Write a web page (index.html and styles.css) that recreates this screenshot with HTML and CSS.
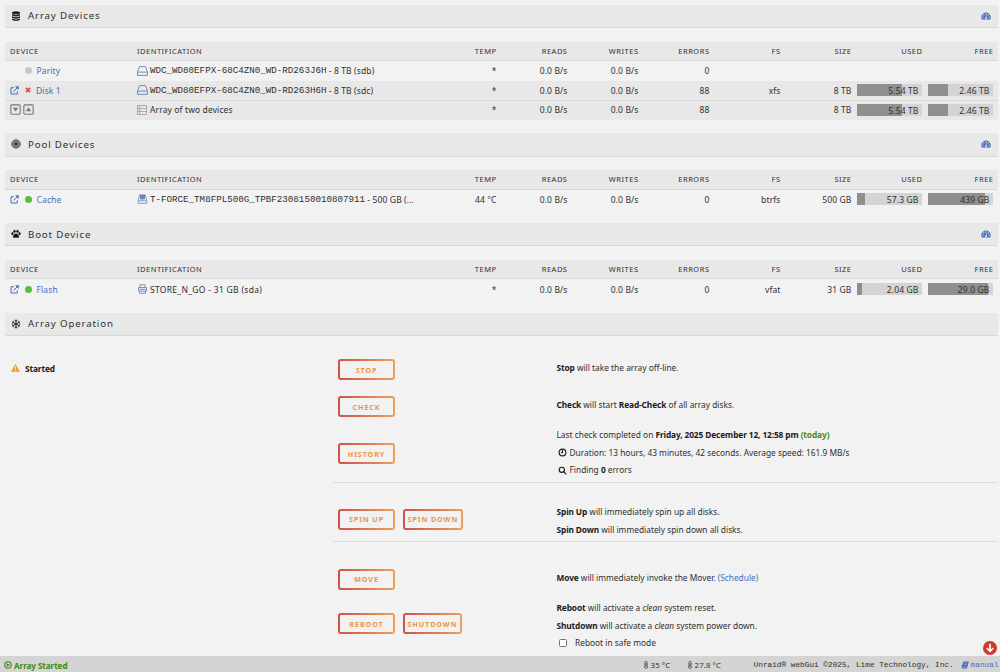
FILE: index.html
```html
<!DOCTYPE html>
<html lang="en">
<head>
    <meta charset="UTF-8">
    <meta name="viewport" content="width=device-width, initial-scale=1.0">
    <title>Main</title>
    <link rel="stylesheet" href="styles.css">
</head>
<body>
    <!-- Shared icons -->
    <svg class="sprite">
        <symbol id="gauge" viewBox="0 0 20 16">
            <path d="M10 1a9.5 9.5 0 0 0-9.5 9.5c0 1.8.5 3.3 1.3 4.7h16.4c.8-1.4 1.3-2.9 1.3-4.7A9.5 9.5 0 0 0 10 1z" fill="#486dba"/>
            <g fill="#e8e8e8"><circle cx="3.7" cy="10.5" r="1.3"/><circle cx="5.6" cy="6" r="1.3"/><circle cx="10" cy="4" r="1.3"/><circle cx="14.4" cy="6" r="1.3"/><circle cx="16.3" cy="10.5" r="1.3"/><circle cx="10" cy="12.5" r="2"/></g>
            <path d="M10 12.5l1.3-6" stroke="#e8e8e8" stroke-width="1.3"/>
        </symbol>
        <symbol id="external" viewBox="0 0 18 18">
            <path d="M8 3.5H2V16h12.5v-5.500M7 11l8.500-8.500" fill="none" stroke="currentColor" stroke-width="2"/>
            <path d="M10 .5h7.500V8z" fill="currentColor"/>
        </symbol>
        <symbol id="disk" viewBox="0 0 20 18">
            <path d="M4.500 1h11L19 11v6H1v-6zM1 11h18" fill="none" stroke="currentColor" stroke-width="1.700"/>
        </symbol>
    </svg>

    <div class="content">
        <div class="title">
            <svg class="icon" viewBox="0 0 18 20"><g fill="#1c1b1b"><ellipse cx="9" cy="3.500" rx="8" ry="3"/><path d="M1 5.500c2 3 14 3 16 0v3c-2 3-14 3-16 0zM1 10c2 3 14 3 16 0v3c-2 3-14 3-16 0zM1 14.500c2 3 14 3 16 0v2c-2 4-14 4-16 0z"/></g></svg>
            <span>Array Devices</span>
            <svg class="gauge"><use href="#gauge"/></svg>
        </div>
        <div class="table">
            <div class="row head">
                <span>DEVICE</span><span>IDENTIFICATION</span><span>TEMP</span><span>READS</span><span>WRITES</span><span>ERRORS</span><span>FS</span><span>SIZE</span><span>USED</span><span>FREE</span>
            </div>
            <div class="row">
                <span class="device"><i class="link"></i><i class="orb grey"></i><a>Parity</a></span>
                <span class="ident"><svg class="disk"><use href="#disk"/></svg><b>WDC_WD80EFPX-68C4ZN0_WD-RD263J6H</b> - 8 TB (sdb)</span>
                <span>*</span><span>0.0 B/s</span><span>0.0 B/s</span><span>0</span><span></span><span></span><span></span><span></span>
            </div>
            <div class="row even">
                <span class="device"><svg class="link"><use href="#external"/></svg><svg class="cross" viewBox="0 0 10 10"><path d="M1.500 1.500l7 7M8.500 1.500l-7 7" stroke="#e2492c" stroke-width="2.600"/></svg><a>Disk 1</a></span>
                <span class="ident"><svg class="disk"><use href="#disk"/></svg><b>WDC_WD80EFPX-68C4ZN0_WD-RD263H6H</b> - 8 TB (sdc)</span>
                <span>*</span><span>0.0 B/s</span><span>0.0 B/s</span><span>88</span><span>xfs</span><span>8 TB</span>
                <div class="usage"><div class="fill" style="width: 69%"></div><span>5.54 TB</span></div>
                <div class="usage"><div class="fill" style="width: 31%"></div><span>2.46 TB</span></div>
            </div>
            <div class="row even total">
                <span class="device">
                    <svg class="toggle" viewBox="0 0 20 20"><rect x="1.500" y="1.500" width="17" height="17" rx="2"/><path d="M5 7h10l-5 6.500z"/></svg>
                    <svg class="toggle" viewBox="0 0 20 20"><rect x="1.500" y="1.500" width="17" height="17" rx="2"/><path d="M5 13h10l-5-6.500z"/></svg>
                </span>
                <span class="ident"><svg class="array" viewBox="0 0 20 20"><path d="M1 1h18v18H1zM1 7h18M1 13h18M5.500 1v18"/></svg>Array of two devices</span>
                <span>*</span><span>0.0 B/s</span><span>0.0 B/s</span><span>88</span><span></span><span>8 TB</span>
                <div class="usage"><div class="fill" style="width: 69%"></div><span>5.54 TB</span></div>
                <div class="usage"><div class="fill" style="width: 31%"></div><span>2.46 TB</span></div>
            </div>
        </div>

        <div class="title">
            <svg class="icon" viewBox="0 0 20 20"><circle cx="10" cy="10" r="8.500" fill="#999" stroke="#444" stroke-width="1.600"/><circle cx="10" cy="10" r="5" fill="none" stroke="#444" stroke-width="1.500"/><circle cx="10" cy="10" r="2.300" fill="#111"/></svg>
            <span>Pool Devices</span>
            <svg class="gauge"><use href="#gauge"/></svg>
        </div>
        <div class="table">
            <div class="row head">
                <span>DEVICE</span><span>IDENTIFICATION</span><span>TEMP</span><span>READS</span><span>WRITES</span><span>ERRORS</span><span>FS</span><span>SIZE</span><span>USED</span><span>FREE</span>
            </div>
            <div class="row">
                <span class="device"><svg class="link"><use href="#external"/></svg><i class="orb"></i><a>Cache</a></span>
                <span class="ident"><svg class="disk" viewBox="0 0 20 20"><path d="M5 1h10v10H5z" fill="currentColor"/><path d="M4.500 1L1.500 13v5.500h17V13l-3-12M1.500 13.500h17" fill="none" stroke="currentColor" stroke-width="1.600"/></svg><b>T-FORCE_TM8FPL500G_TPBF2308150010807911</b> - 500 GB (...</span>
                <span>44 °C</span><span>0.0 B/s</span><span>0.0 B/s</span><span>0</span><span>btrfs</span><span>500 GB</span>
                <div class="usage"><div class="fill" style="width: 12%"></div><span>57.3 GB</span></div>
                <div class="usage"><div class="fill" style="width: 88%"></div><span>439 GB</span></div>
            </div>
        </div>

        <div class="title">
            <svg class="icon" viewBox="0 0 20 20"><g fill="#111"><ellipse cx="3" cy="9.500" rx="2.200" ry="2.900"/><ellipse cx="7" cy="4.500" rx="2.200" ry="3"/><ellipse cx="13" cy="4.500" rx="2.200" ry="3"/><ellipse cx="17" cy="9.500" rx="2.200" ry="2.900"/><path d="M10 9c3 0 6 4 6 6.500S13.500 18 10 17c-3.500 1-6 1-6-1.500S7 9 10 9z"/></g></svg>
            <span>Boot Device</span>
            <svg class="gauge"><use href="#gauge"/></svg>
        </div>
        <div class="table">
            <div class="row head">
                <span>DEVICE</span><span>IDENTIFICATION</span><span>TEMP</span><span>READS</span><span>WRITES</span><span>ERRORS</span><span>FS</span><span>SIZE</span><span>USED</span><span>FREE</span>
            </div>
            <div class="row">
                <span class="device"><svg class="link"><use href="#external"/></svg><i class="orb"></i><a>Flash</a></span>
                <span class="ident flash"><svg class="disk" viewBox="0 0 20 20"><path d="M5 6V1.500h10V6M2 7h16v7H2zM4 14v4.500h12V14M4 10.500h12" fill="none" stroke="currentColor" stroke-width="1.800"/></svg>STORE_N_GO - 31 GB (sda)</span>
                <span>*</span><span>0.0 B/s</span><span>0.0 B/s</span><span>0</span><span>vfat</span><span>31 GB</span>
                <div class="usage"><div class="fill" style="width: 7%"></div><span>2.04 GB</span></div>
                <div class="usage"><div class="fill" style="width: 93%"></div><span>29.0 GB</span></div>
            </div>
        </div>

        <div class="title">
            <svg class="icon" viewBox="0 0 20 20"><path d="M10 1v18M2 5.500l16 9M2 14.500l16-9M7.500 2l2.500 2.500L12.500 2M7.500 18l2.500-2.500 2.500 2.500" fill="none" stroke="#222" stroke-width="2"/><path d="M1.500 9l3.500-1.500-.5-4M18.500 9L15 7.500l.5-4M1.500 11L5 12.500l-.5 4M18.500 11L15 12.500l.5 4" fill="none" stroke="#222" stroke-width="1.300"/></svg>
            <span>Array Operation</span>
        </div>

        <div class="operations">
            <div class="op">
                <div class="status">
                    <svg viewBox="0 0 20 18"><path d="M10 1l9 16H1z" fill="#f0a030" stroke="#f0a030" stroke-width="1.500" stroke-linejoin="round"/><path d="M10 6v5M10 13v2" stroke="#fff" stroke-width="2"/></svg>
                    <strong>Started</strong>
                </div>
                <div class="buttons"><button>STOP</button></div>
                <div class="text"><p><strong>Stop</strong> will take the array off-line.</p></div>
            </div>
            <div class="op check">
                <div class="buttons"><button>CHECK</button></div>
                <div class="text"><p><strong>Check</strong> will start <strong>Read-Check</strong> of all array disks.</p></div>
            </div>
            <div class="op history">
                <div class="buttons"><button>HISTORY</button></div>
                <div class="text">
                    <p>Last check completed on <strong>Friday, 2025 December 12, 12:58 pm</strong> <strong class="green">(today)</strong></p>
                    <p><svg viewBox="0 0 20 20"><circle cx="10" cy="10" r="7.500"/><path d="M10 5v5.500H6.500"/></svg>Duration: 13 hours, 43 minutes, 42 seconds. Average speed: 161.9 MB/s</p>
                    <p><svg viewBox="0 0 20 20"><circle cx="8.500" cy="8.500" r="5.800"/><path d="M12.500 12.500l6 6"/></svg>Finding <strong>0</strong> errors</p>
                </div>
            </div>
            <div class="op spin">
                <div class="buttons"><button>SPIN UP</button><button>SPIN DOWN</button></div>
                <div class="text">
                    <p><strong>Spin Up</strong> will immediately spin up all disks.</p>
                    <p><strong>Spin Down</strong> will immediately spin down all disks.</p>
                </div>
            </div>
            <div class="op move">
                <div class="buttons"><button>MOVE</button></div>
                <div class="text"><p><strong>Move</strong> will immediately invoke the Mover. <a>(Schedule)</a></p></div>
            </div>
            <div class="op reboot">
                <div class="buttons"><button>REBOOT</button><button>SHUTDOWN</button></div>
                <div class="text">
                    <p><strong>Reboot</strong> will activate a <em>clean</em> system reset.</p>
                    <p><strong>Shutdown</strong> will activate a <em>clean</em> system power down.</p>
                    <label><input type="checkbox">Reboot in safe mode</label>
                </div>
            </div>
        </div>
    </div>

    <div class="to-bottom">
        <svg viewBox="0 0 28 28"><circle cx="14" cy="14" r="14" fill="#d0392b"/><path d="M14 5.500v15M7.500 14l6.500 6.500 6.500-6.500" fill="none" stroke="#fff" stroke-width="3.400"/></svg>
    </div>

    <div class="footer">
        <span class="state"><svg viewBox="0 0 20 20"><circle cx="10" cy="10" r="8" fill="none" stroke="currentColor" stroke-width="2.800"/><path d="M7 5.500l8 4.500-8 4.500z" fill="currentColor"/></svg>Array Started</span>
        <span class="temp"><svg viewBox="0 0 12 20"><path d="M3 12V3.500a3 3 0 0 1 6 0V12a4 4 0 1 1-6 0z" fill="none" stroke="#444" stroke-width="1.800"/><path d="M6 5v10" stroke="#444" stroke-width="2.500"/></svg>35 °C</span>
        <span class="temp second"><svg viewBox="0 0 12 20"><path d="M3 12V3.500a3 3 0 0 1 6 0V12a4 4 0 1 1-6 0z" fill="none" stroke="#444" stroke-width="1.800"/><path d="M6 5v10" stroke="#444" stroke-width="2.500"/></svg>27.8 °C</span>
        <span class="copyright">Unraid® webGui ©2025, Lime Technology, Inc.</span>
        <a class="manual"><svg viewBox="0 0 20 20"><path d="M6 1h13.500l-4.500 17.500H3.500C1 18 1 15 2 13z" fill="currentColor"/><path d="M8.500 5h7M7.500 8.500h7M3.500 15.500h11" stroke="#d4d4d4" stroke-width="1.300"/></svg>manual</a>
    </div>
</body>
</html>
```
FILE: styles.css
```css
* {
    box-sizing: border-box;
}

body {
    margin: 0;
    height: 672px;
    overflow: hidden;
    display: flex;
    flex-direction: column;
    background-color: #f2f2f2;
    color: #303030;
    font-family: 'Noto Sans', sans-serif;
    font-size: 8.35px;
}

a {
    color: #486dba;
}

strong {
    color: #1c1b1b;
    letter-spacing: -0.12px;
}

.sprite {
    display: none;
}

.content {
    flex: 1;
    min-height: 0;
    overflow: hidden;
    padding: 4.5px 2px 0 5px;
}

/* Section titles */
.title {
    display: flex;
    align-items: center;
    height: 23.5px;
    padding: 0 7px 0 6px;
    background-color: #e8e8e8;
    border-bottom: 1px solid #d8d8d8;
    font-size: 9.7px;
    letter-spacing: 0.85px;
}

.title .icon {
    width: 10px;
    height: 10px;
    margin-right: 7px;
}

.gauge {
    width: 10px;
    height: 8px;
    margin-left: auto;
}

/* Device tables */
.table {
    margin: 13.5px 0 13.7px;
}

.row {
    display: grid;
    grid-template-columns: 127px 288.5px repeat(8, 71px);
    align-items: center;
    height: 19.5px;
    padding-left: 5px;
    font-size: 8.5px;
    letter-spacing: 0.12px;
    white-space: nowrap;
}

.row > span:nth-child(n+3) {
    text-align: right;
}

.row.head {
    background-color: #e8e8e8;
    border-bottom: 1px solid #d8d8d8;
    font-size: 7.5px;
    letter-spacing: 0.5px;
}

.even {
    background-color: #e8e8e8;
}

.total {
    border-top: 1px solid #dadada;
}

.total > span {
    margin-top: -1px;
}

.device {
    display: flex;
    align-items: center;
}

.link {
    width: 9px;
    height: 9px;
    margin-right: 6px;
    color: #486dba;
}

.orb {
    width: 7px;
    height: 7px;
    margin-right: 4.5px;
    border-radius: 50%;
    background-color: #57bd45;
}

.grey {
    background-color: #c8c8c8;
}

.cross {
    width: 6px;
    height: 6px;
    margin-right: 5px;
}

.toggle {
    width: 11px;
    height: 11px;
    margin-right: 2px;
    fill: #777;
}

.toggle rect {
    fill: none;
    stroke: #777;
    stroke-width: 2;
}

.ident {
    display: flex;
    align-items: center;
    white-space: pre;
}

.ident b {
    font-family: 'Liberation Mono', monospace;
    font-size: 9.2px;
    font-weight: normal;
    letter-spacing: 0;
}

.flash {
    letter-spacing: 0.3px;
}

.disk {
    width: 11px;
    height: 10px;
    margin-right: 2px;
    color: #6a86c0;
}

.array {
    width: 10px;
    height: 10px;
    margin-right: 3px;
    fill: none;
    stroke: #999;
    stroke-width: 1.5;
}

.usage {
    display: flex;
    align-items: center;
    justify-content: flex-end;
    position: relative;
    width: 65px;
    height: 12px;
    margin-left: 5.5px;
    padding-right: 3.5px;
    background-color: #d4d4d4;
}

.fill {
    position: absolute;
    left: 0;
    top: 0;
    height: 100%;
    background-color: #8f8f8f;
}

.usage span {
    position: relative;
}

/* Array operation */
.operations {
    padding-top: 23.2px;
}

.op {
    display: grid;
    grid-template-columns: 328px 223.5px 1fr;
    height: 37px;
}

.buttons {
    grid-column: 2;
    display: flex;
    align-items: flex-start;
    gap: 7.5px;
    padding-left: 5px;
}

.text {
    grid-column: 3;
}

.status {
    display: flex;
    align-items: center;
    height: 17.5px;
    padding-left: 6px;
}

.status svg {
    width: 9px;
    height: 8px;
    margin-right: 5px;
}

button {
    min-width: 57px;
    height: 21px;
    padding: 0 3px;
    border: 2px solid transparent;
    border-radius: 3px;
    background: linear-gradient(#f2f2f2, #f2f2f2) padding-box, linear-gradient(90deg, #cf5048, #eda05c) border-box;
    color: #e8964a;
    font-family: inherit;
    font-size: 7.2px;
    font-weight: bold;
    letter-spacing: 0.9px;
}

p {
    margin: 0;
    height: 17.5px;
    line-height: 17.5px;
    white-space: nowrap;
}

p svg {
    width: 9px;
    height: 9px;
    margin: 0 3px 0 1px;
    vertical-align: -1.5px;
    fill: none;
    stroke: #1c1b1b;
    stroke-width: 2.5;
}

.green {
    color: #4f8a10;
}

.check {
    height: 30px;
}

.history {
    height: 56.5px;
}

.history .buttons {
    padding-top: 17px;
}

.spin {
    height: 59px;
    padding-top: 20.5px;
}

.spin .buttons {
    padding-top: 5.5px;
}

.history, .spin {
    position: relative;
}

/* Divider under the button and text columns */
.history::after, .spin::after {
    content: '';
    position: absolute;
    left: 328px;
    right: 0;
    bottom: 0;
    border-bottom: 1px solid #dcdcdc;
}

.move {
    height: 57.5px;
    padding-top: 27px;
}

.reboot {
    height: 60px;
}

.reboot .buttons {
    padding-top: 14px;
}

label {
    display: flex;
    align-items: center;
    height: 16.5px;
}

input[type="checkbox"] {
    appearance: none;
    width: 8px;
    height: 8px;
    margin: 0 8px 0 2.5px;
    border: 1px solid #767676;
    border-radius: 1.5px;
    background-color: #fff;
}

/* Scroll to bottom */
.to-bottom {
    position: absolute;
    right: 3px;
    bottom: 17px;
    width: 14px;
    height: 14px;
}

.to-bottom svg {
    display: block;
}

/* Footer */
.footer {
    display: flex;
    align-items: center;
    height: 16px;
    padding: 2px 1.5px 0 4px;
    background-color: #d4d4d4;
    font-family: 'Liberation Mono', monospace;
    font-size: 7.75px;
    white-space: nowrap;
}

.footer svg {
    width: 8px;
    height: 8px;
    margin-right: 2px;
}

.footer span, .footer a {
    display: flex;
    align-items: center;
}

.state {
    flex: 1;
    color: #3d8a10;
    font-family: 'Noto Sans', sans-serif;
    font-size: 8.2px;
    font-weight: bold;
    letter-spacing: -0.1px;
}

.footer .temp {
    width: 44px;
    font-family: 'Noto Sans', sans-serif;
    font-size: 7.8px;
    letter-spacing: 0.1px;
}

.footer .temp svg {
    margin-right: 1px;
}

.footer .second {
    width: 68px;
}

.copyright {
    margin-right: 7px;
}
```
